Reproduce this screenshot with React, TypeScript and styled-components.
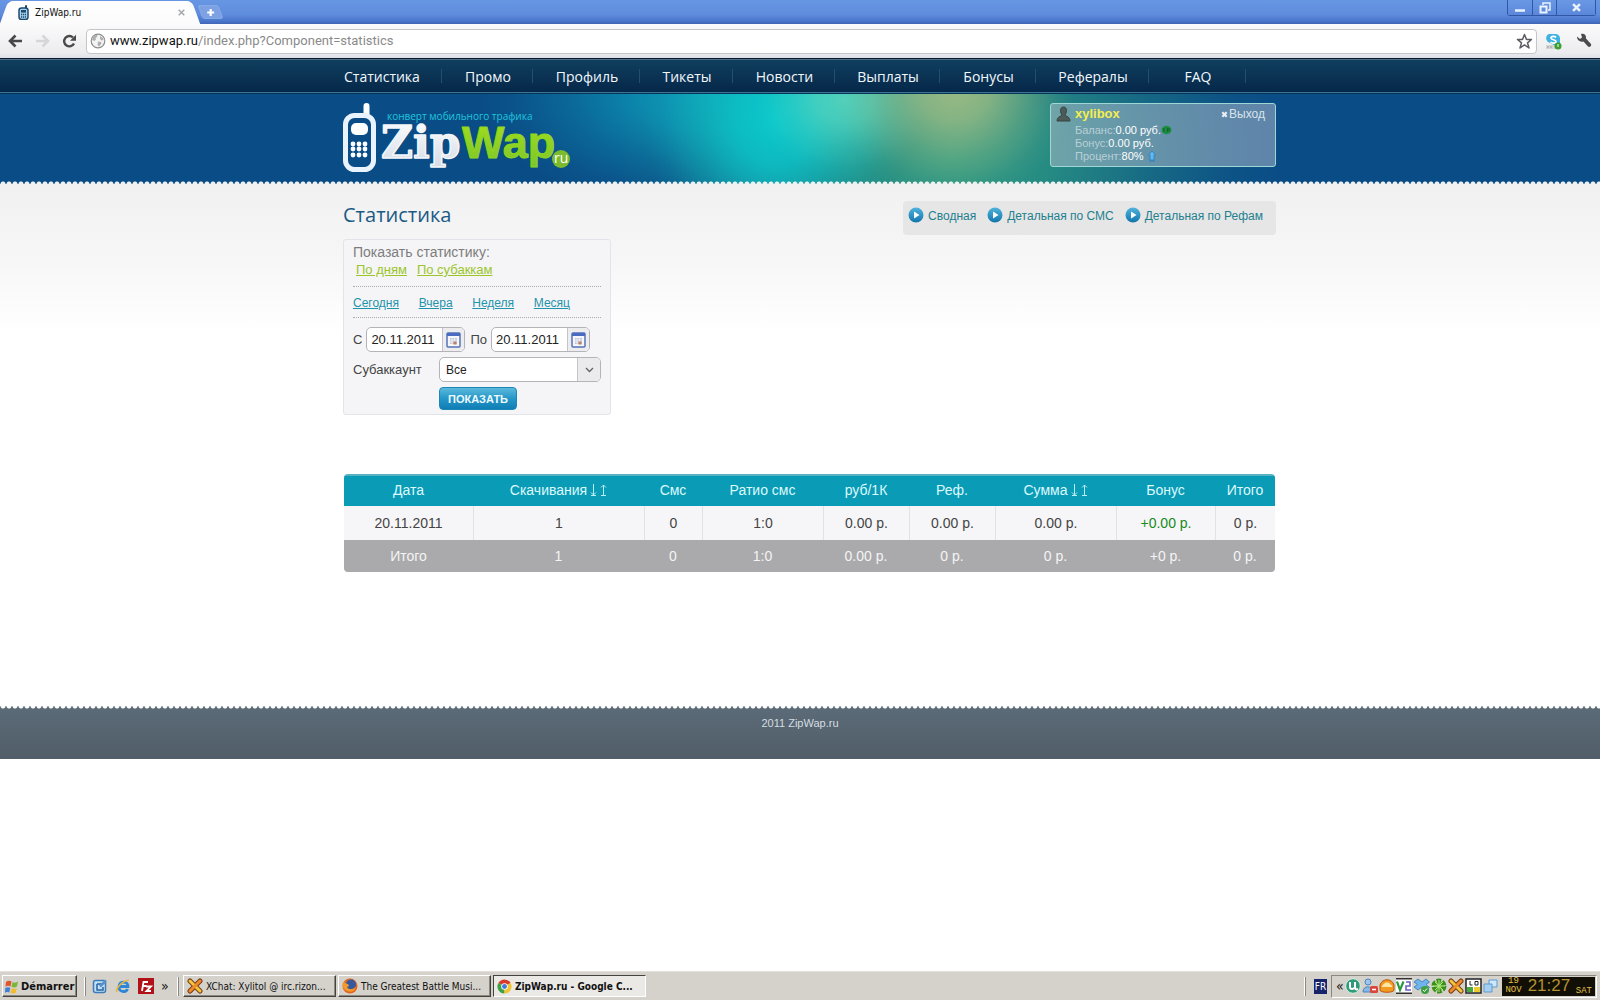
import React from "react";
import styled, { createGlobalStyle, css } from "styled-components";

const ui = `"DejaVu Sans Condensed", "DejaVu Sans", sans-serif`;
const body = `"Liberation Sans", Arial, sans-serif`;
const human = `"Open Sans", "Noto Sans", sans-serif`;

const GlobalStyle = createGlobalStyle`
  *, *::before, *::after { box-sizing: border-box; }
  body { margin: 0; background: #fff; font-family: ${body}; }
  button, input, select { font: inherit; margin: 0; padding: 0; border: 0; background: none; color: inherit; }
  button { cursor: pointer; }
  h1, ul { margin: 0; padding: 0; }
  ul { list-style: none; }
  svg { display: block; flex: none; }
`;

const Screen = styled.div`
  min-height: 100vh;
  display: flex;
  flex-direction: column;
`;

/* ---------- browser chrome ---------- */

const TitleBar = styled.header`
  display: flex;
  align-items: flex-start;
  height: 24px;
  background: linear-gradient(#6796e3, #5f8ddd 60%, #4a75cb 88%, #3f66b4);
`;

const Tab = styled.div`
  position: relative;
  display: flex;
  align-items: center;
  gap: 5px;
  width: 184px;
  height: 23px;
  margin: 1px 8px 0;
  padding: 0 6px 0 10px;
  font-family: ${ui};
  font-size: 10px;
  color: #111;
  isolation: isolate;
  &::before, &::after {
    content: "";
    position: absolute;
    z-index: -1;
    top: 0;
    bottom: 0;
    width: 60%;
    background: linear-gradient(#fff, #fbfbfc);
  }
  &::before { left: -4px; border-radius: 5px 0 0 0; transform: skewX(-20deg); }
  &::after { right: -4px; border-radius: 0 5px 0 0; transform: skewX(20deg); }
`;

const TabTitle = styled.span`
  flex: 1;
`;

const IconButton = styled.button`
  display: flex;
  align-items: center;
  justify-content: center;
  flex: none;
`;

const NewTab = styled(IconButton)`
  width: 21px;
  height: 14px;
  margin: 5px 0 0;
  border: 1px solid #86a9e8;
  border-radius: 3px;
  background: #7da1e2;
  transform: skewX(20deg);
  svg { transform: skewX(-20deg); }
`;

const WindowButtons = styled.div`
  display: flex;
  height: 16px;
  margin-left: auto;
  margin-right: 4px;
  border: 1px solid #2f57a6;
  border-top: 0;
  border-radius: 0 0 3px 3px;
`;

const WindowButton = styled(IconButton)<{ $wide?: boolean }>`
  width: ${(p) => (p.$wide ? 39 : 24)}px;
  background: linear-gradient(#6b98e4, #5a87da);
  & + & { border-left: 1px solid #2f57a6; }
`;

const Toolbar = styled.div`
  display: flex;
  align-items: center;
  height: 34px;
  padding: 0 8px;
  background: linear-gradient(#fbfbfc, #ececee 85%, #dde1e8);
`;

const NavButtons = styled.div`
  display: flex;
  gap: 12px;
  width: 78px;
`;

const AddressBar = styled.div`
  flex: 1;
  display: flex;
  align-items: center;
  gap: 4px;
  height: 25px;
  padding: 0 3px;
  border: 1px solid #c3c5c9;
  border-radius: 4px;
  background: #fff;
`;

const Address = styled.a`
  flex: 1;
  font-family: Roboto, sans-serif;
  font-size: 13px;
  line-height: 20px;
  color: #8a8a8a;
  text-decoration: none;
  b { font-weight: 400; color: #111; }
`;

const ToolbarEnd = styled.div`
  display: flex;
  gap: 14px;
  margin-left: 8px;
`;

/* ---------- site ---------- */

const Container = styled.div`
  max-width: 952px;
  margin: 0 auto;
  padding-left: 19px;
`;

const SiteNav = styled.nav`
  height: 36px;
  border-top: 1px solid #06182a;
  border-bottom: 1px solid #063457;
  background: linear-gradient(#4f7086 0 1px, #0f3f5e 1px, #0a3052 60%, #05284a 33px, #3d7393 33px);
`;

const NavList = styled.ul`
  display: grid;
  grid-template-columns: 99px 91px 107px 93px 102px 105px 96px 113px 97px;
`;

const NavItem = styled.li`
  display: flex;
  justify-content: center;
  align-items: center;
  height: 34px;
  padding: 1px 0 0 1px;
  background: linear-gradient(#234f6e, #234f6e) right 10px / 1px 14px no-repeat;
  &:first-child { justify-content: flex-start; }
`;

const NavLink = styled.a`
  font-family: ${human};
  font-size: 14px;
  line-height: 20px;
  color: #f2f8fb;
  text-decoration: none;
`;

/* A soft light on the banner, placed from the page's centre line. */
const glow = (rx: number, ry: number, x: number, y: number, rgb: string, a: number) =>
  `radial-gradient(ellipse ${rx}px ${ry}px at calc(50% + ${x}px) ${y}px,
    rgba(${rgb}, ${a}), rgba(${rgb}, ${a * 0.8}) 30%, rgba(${rgb}, ${a * 0.35}) 62%, rgba(${rgb}, ${a * 0.08}) 86%, rgba(${rgb}, 0))`;

const Banner = styled.div`
  background:
    ${glow(120, 120, 155, -10, "168, 192, 132", 0.9)},
    ${glow(90, 80, 45, 5, "105, 225, 195", 0.7)},
    ${glow(130, 150, -25, 25, "10, 200, 204", 1)},
    ${glow(330, 260, 150, 60, "45, 155, 130", 1)},
    ${glow(230, 120, -90, 0, "12, 160, 190", 0.9)},
    #0a4d86;
  &::after {
    content: "";
    display: block;
    height: 4px;
    background: radial-gradient(circle at 3px 4px, #f1f1f1 2px, transparent 3px) 0 0 / 6px 4px repeat-x;
  }
`;

const BannerInner = styled(Container)`
  display: flex;
  justify-content: space-between;
  align-items: flex-start;
  height: 86px;
`;

const Home = styled.a`
  padding-top: 8px;
`;

const UserBox = styled.section`
  display: grid;
  grid-template-columns: 16px 1fr auto;
  grid-template-rows: 17px 1fr;
  column-gap: 3px;
  width: 226px;
  margin-top: 9px;
  height: 64px;
  padding: 2px 10px 0 5px;
  border: 1px solid #9fd6d6;
  border-radius: 3px;
  background: rgba(180, 190, 205, 0.5);
  font-size: 11px;
  color: #fff;
`;

const UserName = styled.strong`
  font-size: 13px;
  line-height: 16px;
  color: #f3ee4e;
`;

const Logout = styled.a`
  display: flex;
  align-items: center;
  gap: 1px;
  height: 16px;
  font-size: 12px;
  color: #d8e4ea;
  text-decoration: none;
`;

const Facts = styled.div`
  grid-column: 2 / 4;
`;

const Fact = styled.div`
  display: flex;
  align-items: center;
  height: 13px;
  span { color: #b9cfd8; }
`;

const Content = styled.main`
  padding: 17px 0 134px;
  background: linear-gradient(#f1f1f1, #f6f6f6 70px, #fff 150px);
`;

const TopRow = styled.div`
  display: flex;
  justify-content: space-between;
  align-items: flex-start;
`;

const Title = styled.h1`
  font-family: ${human};
  font-size: 20px;
  font-weight: 400;
  line-height: 28px;
  color: #1c5a86;
`;

const ReportLinks = styled.nav`
  display: flex;
  gap: 11px;
  height: 34px;
  padding: 6px 13px 0 5px;
  border-radius: 4px;
  background: #e6e6e6;
`;

const ReportLink = styled.a`
  display: flex;
  gap: 4px;
  height: 16px;
  font-size: 12px;
  line-height: 18px;
  color: #22808f;
  text-decoration: none;
`;

const Filter = styled.form`
  width: 268px;
  margin-top: 4px;
  height: 176px;
  padding: 3px 9px;
  border: 1px solid #e3e4ea;
  border-radius: 3px;
  background: #f5f5f7;
  font-size: 13px;
  line-height: 18px;
  color: #444;
`;

const Caption = styled.div`
  font-size: 14px;
  color: #7d7d7d;
`;

const ModeLinks = styled.div`
  display: flex;
  gap: 10px;
  padding: 0 3px 7px;
  a { color: #9bc52b; }
`;

const Periods = styled.div`
  display: flex;
  justify-content: space-between;
  align-items: center;
  height: 32px;
  padding: 2px 31px 0 0;
  border: 1px dotted #aaa;
  border-width: 1px 0;
  font-size: 12px;
  a { color: #1f93ab; }
`;

const Dates = styled.div`
  display: flex;
  align-items: center;
  gap: 4px;
  margin: 9px 0 5px;
`;

const DateLabel = styled.label`
  & ~ & { margin-left: 1px; }
`;

const Field = styled.div<{ $width: number }>`
  display: flex;
  width: ${(p) => p.$width}px;
  height: 25px;
  border: 1px solid #b4b4b8;
  border-radius: 5px;
  background: #fff;
  overflow: hidden;
  color: #222;
`;

const DateInput = styled.input`
  flex: 1;
  min-width: 0;
  padding-left: 4px;
`;

const FieldButton = styled(IconButton)`
  width: 22px;
  border-left: 1px solid #c4c4c8;
  background: #ededf0;
`;

const Account = styled.div`
  display: grid;
  grid-template-columns: 86px 162px;
  align-items: center;
  row-gap: 5px;
`;

const AccountSelect = styled.select`
  appearance: none;
  flex: 1;
  padding-left: 6px;
  font-size: 12px;
`;

const SelectArrow = styled.span`
  display: flex;
  align-items: center;
  justify-content: center;
  width: 23px;
  border-left: 1px solid #c4c4c8;
  background: #ebebee;
  pointer-events: none;
`;

const Submit = styled.button`
  grid-column: 2;
  justify-self: start;
  width: 78px;
  height: 23px;
  border: 1px solid #1c86b4;
  border-radius: 4px;
  background: linear-gradient(#5cb9dc, #2597c8 50%, #0f7db5);
  font-size: 11px;
  font-weight: 700;
  color: #eefaff;
`;

const Table = styled.table`
  width: 931px;
  margin: 59px 0 0 1px;
  table-layout: fixed;
  border-spacing: 0;
  border-radius: 4px;
  overflow: hidden;
  font-size: 14px;
  text-align: center;
  th, td { padding: 0; font-weight: 400; }
`;

const HeadRow = styled.tr`
  height: 32px;
  background: linear-gradient(#56b1c3 2px, #0a9bb7 2px);
  color: #dcf9fc;
`;

const DataRow = styled.tr`
  height: 34px;
  background: #f6f6f8;
  color: #444;
  td + td { border-left: 1px solid #e2e2e6; }
`;

const TotalRow = styled.tr`
  height: 32px;
  background: #aaaaac;
  color: #f4f4f4;
`;

const Amount = styled.td`
  color: #178a1c;
`;

const Sortable = styled.span`
  display: inline-flex;
  align-items: center;
  gap: 3px;
`;

const Footer = styled.footer`
  height: 53px;
  background: linear-gradient(#5b6b77, #515e69);
  font-size: 11px;
  line-height: 14px;
  text-align: center;
  color: #d5dde2;
  &::before {
    content: "";
    display: block;
    height: 4px;
    margin-bottom: 6px;
    background: radial-gradient(circle at 3px 0, #fff 2px, transparent 3px) 0 0 / 6px 4px repeat-x;
  }
`;

/* ---------- desktop taskbar ---------- */

const Taskbar = styled.div`
  display: flex;
  align-items: center;
  height: 29px;
  margin-top: auto;
  padding: 0 3px 0 2px;
  border-top: 1px solid #e4e1dc;
  background: #d5d1cb;
  font-family: ${ui};
  font-size: 10px;
  color: #111;
`;

const raised = css`
  border: 1px solid;
  border-color: #fff #45433f #45433f #fff;
  box-shadow: inset -1px -1px #8b8882;
`;

const StartButton = styled.button`
  display: flex;
  align-items: center;
  gap: 2px;
  width: 75px;
  height: 22px;
  padding: 0 2px;
  font-size: 11px;
  font-weight: 700;
  white-space: nowrap;
  ${raised}
`;

const Grip = styled.i`
  width: 2px;
  height: 19px;
  margin: 0 4px 0 7px;
  border-left: 1px solid #fff;
  border-right: 1px solid #8b8882;
`;

const Quick = styled.div`
  display: flex;
  align-items: center;
  gap: 7px;
  width: 80px;
  padding-left: 2px;
`;

const Chevrons = styled.span`
  width: 8px;
  font-size: 14px;
  line-height: 14px;
`;

const Task = styled.button<{ $active?: boolean }>`
  display: flex;
  align-items: center;
  gap: 3px;
  width: 153px;
  height: 22px;
  margin-right: 2px;
  padding: 0 2px 0 3px;
  white-space: nowrap;
  ${raised}
  ${(p) =>
    p.$active &&
    css`
      border-color: #45433f #fff #fff #45433f;
      box-shadow: none;
      background: #ebe9e6;
      font-weight: 700;
    `}
`;

const TrayArea = styled.div`
  display: flex;
  align-items: center;
  gap: 4px;
  margin-left: auto;
`;

const Language = styled.span`
  width: 13px;
  background: #16246b;
  line-height: 15px;
  text-align: center;
  color: #fff;
`;

const Tray = styled.div`
  display: flex;
  align-items: center;
  gap: 1px;
  width: 266px;
  height: 23px;
  padding: 0 1px 0 4px;
  border: 1px solid;
  border-color: #8b8882 #fff #fff #8b8882;
`;

const Clock = styled.time`
  display: flex;
  align-items: center;
  justify-content: space-between;
  width: 93px;
  height: 19px;
  margin-left: auto;
  padding: 0 3px;
  background: #120f06;
  font-family: "Liberation Mono", monospace;
  font-size: 9px;
  line-height: 9px;
  color: #e3c24a;
  text-align: center;
`;

const ClockDay = styled.span`
  width: 17px;
`;

const ClockTime = styled.span`
  font-family: ${body};
  font-size: 17px;
  line-height: 18px;
  color: #b3912d;
`;

const ClockWeek = styled.span`
  align-self: flex-end;
`;

/* ---------- drawings ---------- */

const PhoneIcon = () => (
  <svg width="12" height="15" viewBox="0 0 12 15">
    <path d="M8 1v3" stroke="#1b4a70" strokeWidth="2" strokeLinecap="round" />
    <rect x="1" y="3" width="9" height="11.5" rx="2.5" fill="#a9d3ec" stroke="#1b4a70" strokeWidth="1.5" />
    <rect x="3" y="5" width="5" height="2.6" fill="#1b4a70" />
    <path d="M3 9.5h5M3 12h5" stroke="#1b4a70" strokeWidth="1.3" strokeDasharray="1.2 .7" />
  </svg>
);

const Arrow = ({ color, flip }: { color: string; flip?: boolean }) => (
  <svg width="15" height="14" viewBox="0 0 15 14">
    <g transform={flip ? "matrix(-1 0 0 1 15 0)" : undefined}>
      <path d="M7.5 1.5L2 7l5.500 5.500M2.500 7H14" fill="none" stroke={color} strokeWidth="2.600" />
    </g>
  </svg>
);

const ReloadIcon = () => (
  <svg width="15" height="15" viewBox="0 0 15 15">
    <path d="M12 9.500A5.200 5.200 0 1 1 11 3.500" fill="none" stroke="#4a4a4a" strokeWidth="2.400" />
    <path d="M14 .8v6H8z" fill="#4a4a4a" />
  </svg>
);

const GlobeIcon = () => (
  <svg width="16" height="16" viewBox="0 0 16 16">
    <circle cx="8" cy="8" r="6.800" fill="#f4f4f4" stroke="#8d8d8d" strokeWidth="1.200" />
    <path d="M3 4c1.500-1.800 3.500-2.200 4.500-2L7 4 5.500 5l.5 1.500L4.500 8 2 7zM10 3l3 2 .5 2-2 .5L10 6zM8 8.500l3 .5.500 1.500L9 13.500 7.500 12z" fill="#b0b0b0" />
  </svg>
);

const StarIcon = () => (
  <svg width="17" height="17" viewBox="0 0 17 17">
    <path d="M8.500 1.500l2 5h5l-4 3.300 1.500 5.200-4.500-3.100L4 15l1.500-5.200-4-3.300h5z" fill="#fff" stroke="#5a5a62" strokeWidth="1.500" strokeLinejoin="round" />
  </svg>
);

const SkypeIcon = () => (
  <svg width="17" height="17" viewBox="0 0 17 17">
    <path d="M4 1h7a4.500 4.500 0 0 1 4 5v4a4 4 0 0 1-6 2L3 9C0 6 1 2 4 1z" fill="#3eb2e0" />
    <path d="M11 4.500C10 3 6 3 6 5s5 1.500 5 3.500-4 2-5.500.5" fill="none" stroke="#fff" strokeWidth="1.700" />
    <path d="M1 12h9v4H1z" fill="#d5d5d5" />
    <path d="M2 14h6" stroke="#999" strokeDasharray="2 1" />
    <circle cx="13" cy="13" r="3.500" fill="#3c9e2f" />
    <path d="M13 11v3" stroke="#fff" />
  </svg>
);

const WrenchIcon = () => (
  <svg width="16" height="16" viewBox="0 0 16 16">
    <path d="M1 3.500L4 6l2-1.500L5 1c3-1 5.500 1 5 4.500l5 5.500c1 1.500-1.500 4-3 2.500L7.500 8.500C4 9.500 1 7 1 3.500z" fill="#4b4b4b" />
  </svg>
);

const Logo = () => (
  <svg width="230" height="76" viewBox="0 0 230 76" role="img" aria-label="ZipWap.ru">
    <defs>
      <linearGradient id="silver" x1="0" y1="0" x2="0" y2="1">
        <stop offset="0" stopColor="#fff" />
        <stop offset="1" stopColor="#d3dbe6" />
      </linearGradient>
      <linearGradient id="lime" x1="0" y1="0" x2="0" y2="1">
        <stop offset="0" stopColor="#a4e01a" />
        <stop offset="1" stopColor="#7cc42c" />
      </linearGradient>
    </defs>
    <path d="M23.500 12V4" stroke="#fff" strokeWidth="6" strokeLinecap="round" />
    <rect x="2.500" y="13.500" width="28" height="54" rx="9" fill="#0a4d86" stroke="#e9f3fd" strokeWidth="5" />
    <rect x="8" y="21" width="17" height="12" rx="5" fill="#fff" />
    {[42, 47, 53].map((y) =>
      [10, 16, 22].map((x) => <circle key={`${x}-${y}`} cx={x} cy={y} r="2.400" fill="#fff" />)
    )}
    <text x="44" y="18" fontFamily={`"Open Sans", sans-serif`} fontSize="10" fill="#1fc5de">
      конверт мобильного трафика
    </text>
    <text x="38" y="56" fontFamily={`"DejaVu Serif", serif`} fontWeight="700" fontSize="44" fill="url(#silver)" stroke="#f3f5f8" strokeWidth="1.500" strokeLinejoin="round">
      Zip
    </text>
    <text x="119" y="56" fontFamily={`"Liberation Sans", sans-serif`} fontWeight="700" fontSize="45" fill="url(#lime)" stroke="#90d620" strokeWidth="1" strokeLinejoin="round">
      Wap
    </text>
    <circle cx="218" cy="57" r="9" fill="#7cba2e" />
    <text x="211" y="61" fontFamily={`"Open Sans", sans-serif`} fontSize="14" fill="#fff">
      ru
    </text>
  </svg>
);

const UserIcon = () => (
  <svg width="15" height="16" viewBox="0 0 15 16">
    <path d="M7.500 1C4.500 1 4 4 5 7l1 2c-1 1.500-5 1.500-5 6h13c0-4.500-4-4.500-5-6l1-2c1-3 .5-6-2.500-6z" fill="#4c5a58" stroke="#36433f" />
  </svg>
);

const CrossIcon = ({ color, size, width }: { color: string; size: number; width: number }) => (
  <svg width={size} height={size} viewBox="0 0 8 8">
    <path d="M1.500 1.500l5 5M6.500 1.500l-5 5" stroke={color} strokeWidth={width} />
  </svg>
);

const CoinsIcon = () => (
  <svg width="11" height="10" viewBox="0 0 11 10">
    <ellipse cx="5.500" cy="5" rx="5" ry="4.200" fill="#1f8f45" />
    <path d="M3 3v4M5.500 2.500c1.500 1 1.500 4 0 5M8 3v3.500" stroke="#0d5f2b" fill="none" />
  </svg>
);

const UpIcon = () => (
  <svg width="15" height="12" viewBox="0 0 15 12">
    <path d="M8 1L4.500 5H6v5h4V5h1.500z" fill="#5fb8ee" stroke="#2b7fc0" strokeWidth=".8" />
    <path d="M5 11h6" stroke="#2b7fc0" />
  </svg>
);

const PlayIcon = () => (
  <svg width="16" height="16" viewBox="0 0 16 16">
    <defs>
      <linearGradient id="play" x1="0" y1="0" x2="0" y2="1">
        <stop offset="0" stopColor="#4fb3dc" />
        <stop offset="1" stopColor="#1276ae" />
      </linearGradient>
    </defs>
    <circle cx="8" cy="8" r="7.500" fill="url(#play)" />
    <path d="M6 4.500l5.500 3.500L6 11.500z" fill="#fff" />
  </svg>
);

const CalendarIcon = () => (
  <svg width="15" height="16" viewBox="0 0 15 16">
    <rect x="1" y="1" width="13" height="14" rx="1" fill="#f4f6fb" stroke="#5672b6" strokeWidth="1.500" />
    <path d="M1 2.500h13" stroke="#4a6cc0" strokeWidth="3" />
    <path d="M4 6h7v6H4z" fill="#c0c6d8" />
    <path d="M6 6v6M8.500 6v6M4 8h7M4 10h7" stroke="#fff" strokeWidth=".6" />
    <path d="M7.500 9.500h3v3h-3z" fill="#b98160" />
  </svg>
);

const SortArrow = ({ up }: { up?: boolean }) => (
  <svg width="7" height="12" viewBox="0 0 7 12">
    <path d={up ? "M3.500 1v10M1 3.500L3.500 1 6 3.500M1 11.500h5" : "M3.500 0v11M1 8.500l2.500 2.500L6 8.500M1 11.500h5"} fill="none" stroke="#b9ecf3" />
  </svg>
);

const WindowsIcon = () => (
  <svg width="14" height="15" viewBox="0 0 14 15">
    <path d="M1 3c2-1.500 3.500-1.500 5.500-.5l-1 5c-2-1-3.500-.8-5 .2z" fill="#e2552a" />
    <path d="M7.500 3c2 1 3.500.8 5.500-.5l-1 5c-2 1.300-3.500 1.300-5.500.3z" fill="#7bb83a" />
    <path d="M.3 9c2-1.200 3.200-1 5-.2l-1 4.700c-1.500-.8-3-.8-4.300.2z" fill="#3f7fd8" />
    <path d="M6.500 9.200c2 1 3.500.8 5.200-.2l-1 4.700c-1.500 1-3.200 1-5.200 0z" fill="#f2bd2c" />
  </svg>
);

const NotesIcon = () => (
  <svg width="16" height="16" viewBox="0 0 16 16">
    <rect x="1.500" y="2.500" width="12" height="12" rx="2" fill="#bfe0f6" stroke="#3c7cb8" strokeWidth="1.500" />
    <path d="M5 6h5M5 6v6h6V9" fill="none" stroke="#2a62a0" strokeWidth="1.500" />
    <path d="M8 8.500l6-6" stroke="#5a90c8" strokeWidth="2.500" />
  </svg>
);

const ExplorerIcon = () => (
  <svg width="16" height="16" viewBox="0 0 16 16">
    <path d="M4 8.500h9C13 3 5 2.500 4 8.500c-.5 5.500 7 6.500 8.500 2.500" fill="none" stroke="#2e86d6" strokeWidth="2.800" />
    <path d="M2 14C0 11 7 3 14 2" fill="none" stroke="#e6b73a" strokeWidth="1.600" />
  </svg>
);

const FileZillaIcon = () => (
  <svg width="16" height="16" viewBox="0 0 16 16">
    <path d="M0 0h16v16H0z" fill="#b01217" />
    <path d="M4 13l1.500-9H10M4.500 8h4M8 8.500h5L8.500 13H13" fill="none" stroke="#fff" strokeWidth="1.800" />
  </svg>
);

const XChatIcon = () => (
  <svg width="16" height="16" viewBox="0 0 16 16">
    <path d="M3 3l10 10M13 3L3 13" stroke="#7a3c12" strokeWidth="5" strokeLinecap="round" />
    <path d="M3 3l10 10" stroke="#f2c53a" strokeWidth="3" strokeLinecap="round" />
    <path d="M13 3L3 13" stroke="#ee8a2c" strokeWidth="3" strokeLinecap="round" />
  </svg>
);

const FirefoxIcon = () => (
  <svg width="16" height="16" viewBox="0 0 16 16">
    <circle cx="8" cy="8" r="7.500" fill="#e2661c" />
    <circle cx="9" cy="6.500" r="5" fill="#35599f" />
    <path d="M1 4c2 0 3 2 5 2l1 2-2 1c1 3 6 3 8.500 0C13 13 9 15 5 13S0 8 1 4z" fill="#f29a2a" />
  </svg>
);

const ChromeIcon = () => (
  <svg width="15" height="15" viewBox="0 0 16 16">
    <path d="M8 8L1.500 4.200A7.500 7.500 0 0 1 14.500 4.200z" fill="#d93b2b" />
    <path d="M8 8L1.500 4.200A7.500 7.500 0 0 0 8 15.500z" fill="#3fa14a" />
    <path d="M8 8l6.500-3.800A7.500 7.500 0 0 1 8 15.500z" fill="#f1c52f" />
    <circle cx="8" cy="8" r="3.500" fill="#fff" />
    <circle cx="8" cy="8" r="2.600" fill="#3f7ad6" />
  </svg>
);

const TrayIcons = () => (
  <>
    <svg width="16" height="16" viewBox="0 0 16 16">
      <circle cx="8" cy="8" r="7.300" fill="#2f9b78" stroke="#d9f0e6" />
      <path d="M5 4v5c0 2.500 4 2.500 5 0V4M10 9c0 2 1 3 3 2" fill="none" stroke="#fff" strokeWidth="2" />
    </svg>
    <svg width="16" height="16" viewBox="0 0 16 16">
      <circle cx="6" cy="4" r="3" fill="#9cc6ea" stroke="#4a86c0" />
      <path d="M1 14c0-7 9-7 10 0z" fill="#86b8e4" stroke="#4a86c0" />
      <rect x="8" y="8" width="8" height="7" rx="1.500" fill="#d9473c" />
      <path d="M10 11.500h4" stroke="#fff" strokeWidth="1.500" />
    </svg>
    <svg width="16" height="16" viewBox="0 0 16 16">
      <path d="M1 7c2-7 12-7 14 0v5c0 3-14 3-14 0z" fill="#f39a22" stroke="#b9560f" />
      <path d="M2.500 9c3-6 8-6 11 0z" fill="#fde6a4" />
    </svg>
    <svg width="16" height="16" viewBox="0 0 16 16">
      <path d="M0 0h16v16H0z" fill="#fff" />
      <path d="M0 .8h16M0 15.200h16" stroke="#333" strokeWidth="1.500" />
      <path d="M1 3.500L4 12l3.500-8.500" fill="none" stroke="#2b9a3c" strokeWidth="2.200" />
      <path d="M10 4h4v4h-4v4h5" fill="none" stroke="#6a62c0" strokeWidth="1.600" />
    </svg>
    <svg width="17" height="16" viewBox="0 0 17 16">
      <path d="M5 1l4 3 4-3 3.500 3-3.500 2.500 3.500 3L12 12l-3-3-4 3-4-3 3.500-2.500L1 4z" fill="#6fb4ec" stroke="#3277b8" strokeWidth=".8" />
      <circle cx="12" cy="12" r="4" fill="#3a9f3c" />
      <path d="M10 12l1.500 1.500L14 10.500" fill="none" stroke="#fff" />
    </svg>
    <svg width="16" height="16" viewBox="0 0 16 16">
      <circle cx="8" cy="8" r="5" fill="#7ccc44" stroke="#3c8f1f" strokeWidth="5" strokeDasharray="4 1.200" />
      <path d="M8 2v12M2 8h12M4 4l8 8M12 4l-8 8" stroke="#a9e57c" />
    </svg>
    <XChatIcon />
    <svg width="17" height="16" viewBox="0 0 17 16">
      <path d="M1 1h15v14H1z" fill="#fff" stroke="#222" strokeWidth="1.500" />
      <path d="M5 3v4h2.500M10 3.500h3V7h-3z" fill="none" stroke="#222" />
      <path d="M2 9h6v5H2z" fill="#47a93c" />
      <path d="M9 9h6v5H9z" fill="#eccb2c" />
    </svg>
    <svg width="15" height="16" viewBox="0 0 15 16">
      <path d="M6 2h8v7H6z" fill="#cfe6f8" stroke="#5a9bd4" />
      <path d="M1 6h8v8H1z" fill="#a5d0f2" stroke="#5a9bd4" />
    </svg>
  </>
);

/* ---------- data ---------- */

const menu = ["Статистика", "Промо", "Профиль", "Тикеты", "Новости", "Выплаты", "Бонусы", "Рефералы", "FAQ"];
const reports = ["Сводная", "Детальная по СМС", "Детальная по Рефам"];
const periods = ["Сегодня", "Вчера", "Неделя", "Месяц"];
const columns = [
  { name: "Дата", width: 129 },
  { name: "Скачивания", width: 171, sortable: true },
  { name: "Смс", width: 58 },
  { name: "Ратио смс", width: 121 },
  { name: "руб/1К", width: 86 },
  { name: "Реф.", width: 86 },
  { name: "Сумма", width: 121, sortable: true },
  { name: "Бонус", width: 99 },
  { name: "Итого", width: 60 },
];
const row = ["20.11.2011", "1", "0", "1:0", "0.00 р.", "0.00 р.", "0.00 р.", "+0.00 р.", "0 р."];
const total = ["Итого", "1", "0", "1:0", "0.00 р.", "0 р.", "0 р.", "+0 р.", "0 р."];

const DateField = ({ id, label }: { id: string; label: string }) => (
  <>
    <DateLabel htmlFor={id}>{label}</DateLabel>
    <Field $width={99}>
      <DateInput id={id} defaultValue="20.11.2011" />
      <FieldButton type="button" aria-label="Календарь">
        <CalendarIcon />
      </FieldButton>
    </Field>
  </>
);

export default function App() {
  return (
    <Screen>
      <GlobalStyle />
      <TitleBar>
        <Tab>
          <PhoneIcon />
          <TabTitle>ZipWap.ru</TabTitle>
          <IconButton aria-label="Закрыть вкладку">
            <CrossIcon color="#a2a6ad" size={9} width={1.3} />
          </IconButton>
        </Tab>
        <NewTab aria-label="Новая вкладка">
          <svg width="9" height="9" viewBox="0 0 9 9">
            <path d="M4.500 1v7M1 4.500h7" stroke="#fff" strokeWidth="2.200" />
          </svg>
        </NewTab>
        <WindowButtons>
          <WindowButton aria-label="Свернуть">
            <svg width="12" height="12" viewBox="0 0 12 12">
              <path d="M1 8.500h10" stroke="#e9f2ff" strokeWidth="2.500" />
            </svg>
          </WindowButton>
          <WindowButton aria-label="Восстановить">
            <svg width="12" height="12" viewBox="0 0 12 12">
              <path d="M4 3V1h7v7H9" fill="none" stroke="#e9f2ff" strokeWidth="1.500" />
              <path d="M1.500 4.500h6v6h-6z" fill="none" stroke="#e9f2ff" strokeWidth="2" />
            </svg>
          </WindowButton>
          <WindowButton aria-label="Закрыть" $wide>
            <CrossIcon color="#e9f2ff" size={11} width={1.8} />
          </WindowButton>
        </WindowButtons>
      </TitleBar>
      <Toolbar>
        <NavButtons>
          <IconButton aria-label="Назад"><Arrow color="#484848" /></IconButton>
          <IconButton aria-label="Вперёд"><Arrow color="#d6d6d8" flip /></IconButton>
          <IconButton aria-label="Обновить"><ReloadIcon /></IconButton>
        </NavButtons>
        <AddressBar>
          <GlobeIcon />
          <Address href="#address"><b>www.zipwap.ru</b>/index.php?Component=statistics</Address>
          <IconButton aria-label="В закладки"><StarIcon /></IconButton>
        </AddressBar>
        <ToolbarEnd>
          <IconButton aria-label="Skype"><SkypeIcon /></IconButton>
          <IconButton aria-label="Настройки"><WrenchIcon /></IconButton>
        </ToolbarEnd>
      </Toolbar>

      <SiteNav>
        <Container>
          <NavList>
            {menu.map((m) => (
              <NavItem key={m}><NavLink href="#menu">{m}</NavLink></NavItem>
            ))}
          </NavList>
        </Container>
      </SiteNav>
      <Banner>
        <BannerInner>
          <Home href="#home"><Logo /></Home>
          <UserBox>
            <UserIcon />
            <UserName>xylibox</UserName>
            <Logout href="#logout"><CrossIcon color="#e6eef2" size={7} width={2.6} />Выход</Logout>
            <Facts>
              <Fact><span>Баланс:</span>0.00 руб.<CoinsIcon /></Fact>
              <Fact><span>Бонус:</span>0.00 руб.</Fact>
              <Fact><span>Процент:</span>80%<UpIcon /></Fact>
            </Facts>
          </UserBox>
        </BannerInner>
      </Banner>

      <Content>
        <Container>
          <TopRow>
            <Title>Статистика</Title>
            <ReportLinks>
              {reports.map((r) => (
                <ReportLink key={r} href="#report"><PlayIcon />{r}</ReportLink>
              ))}
            </ReportLinks>
          </TopRow>
          <Filter onSubmit={(e) => e.preventDefault()}>
            <Caption>Показать статистику:</Caption>
            <ModeLinks>
              <a href="#days">По дням</a>
              <a href="#subs">По субаккам</a>
            </ModeLinks>
            <Periods>
              {periods.map((p) => <a key={p} href="#period">{p}</a>)}
            </Periods>
            <Dates>
              <DateField id="from" label="С" />
              <DateField id="to" label="По" />
            </Dates>
            <Account>
              <label htmlFor="sub">Субаккаунт</label>
              <Field $width={162}>
                <AccountSelect id="sub"><option>Все</option></AccountSelect>
                <SelectArrow>
                  <svg width="9" height="6" viewBox="0 0 9 6">
                    <path d="M1 1l3.500 3.500L8 1" fill="none" stroke="#666" strokeWidth="1.400" />
                  </svg>
                </SelectArrow>
              </Field>
              <Submit>ПОКАЗАТЬ</Submit>
            </Account>
          </Filter>
          <Table>
            <colgroup>
              {columns.map((c) => <col key={c.name} width={c.width} />)}
            </colgroup>
            <thead>
              <HeadRow>
                {columns.map((c) => (
                  <th key={c.name} scope="col">
                    {c.sortable ? <Sortable>{c.name}<SortArrow /><SortArrow up /></Sortable> : c.name}
                  </th>
                ))}
              </HeadRow>
            </thead>
            <tbody>
              <DataRow>
                {row.map((v, i) => (i === 7 ? <Amount key={i}>{v}</Amount> : <td key={i}>{v}</td>))}
              </DataRow>
            </tbody>
            <tfoot>
              <TotalRow>{total.map((v, i) => <td key={i}>{v}</td>)}</TotalRow>
            </tfoot>
          </Table>
        </Container>
      </Content>
      <Footer>2011 ZipWap.ru</Footer>

      <Taskbar>
        <StartButton><WindowsIcon />Démarrer</StartButton>
        <Grip />
        <Quick><NotesIcon /><ExplorerIcon /><FileZillaIcon /><Chevrons>»</Chevrons></Quick>
        <Grip />
        <Task><XChatIcon />XChat: Xylitol @ irc.rizon...</Task>
        <Task><FirefoxIcon />The Greatest Battle Musi...</Task>
        <Task $active><ChromeIcon />ZipWap.ru - Google C...</Task>
        <TrayArea>
          <Grip />
          <Language>FR</Language>
          <Tray>
            <Chevrons>«</Chevrons>
            <TrayIcons />
            <Clock>
              <ClockDay>19 NOV</ClockDay>
              <ClockTime>21:27</ClockTime>
              <ClockWeek>SAT</ClockWeek>
            </Clock>
          </Tray>
        </TrayArea>
      </Taskbar>
    </Screen>
  );
}
